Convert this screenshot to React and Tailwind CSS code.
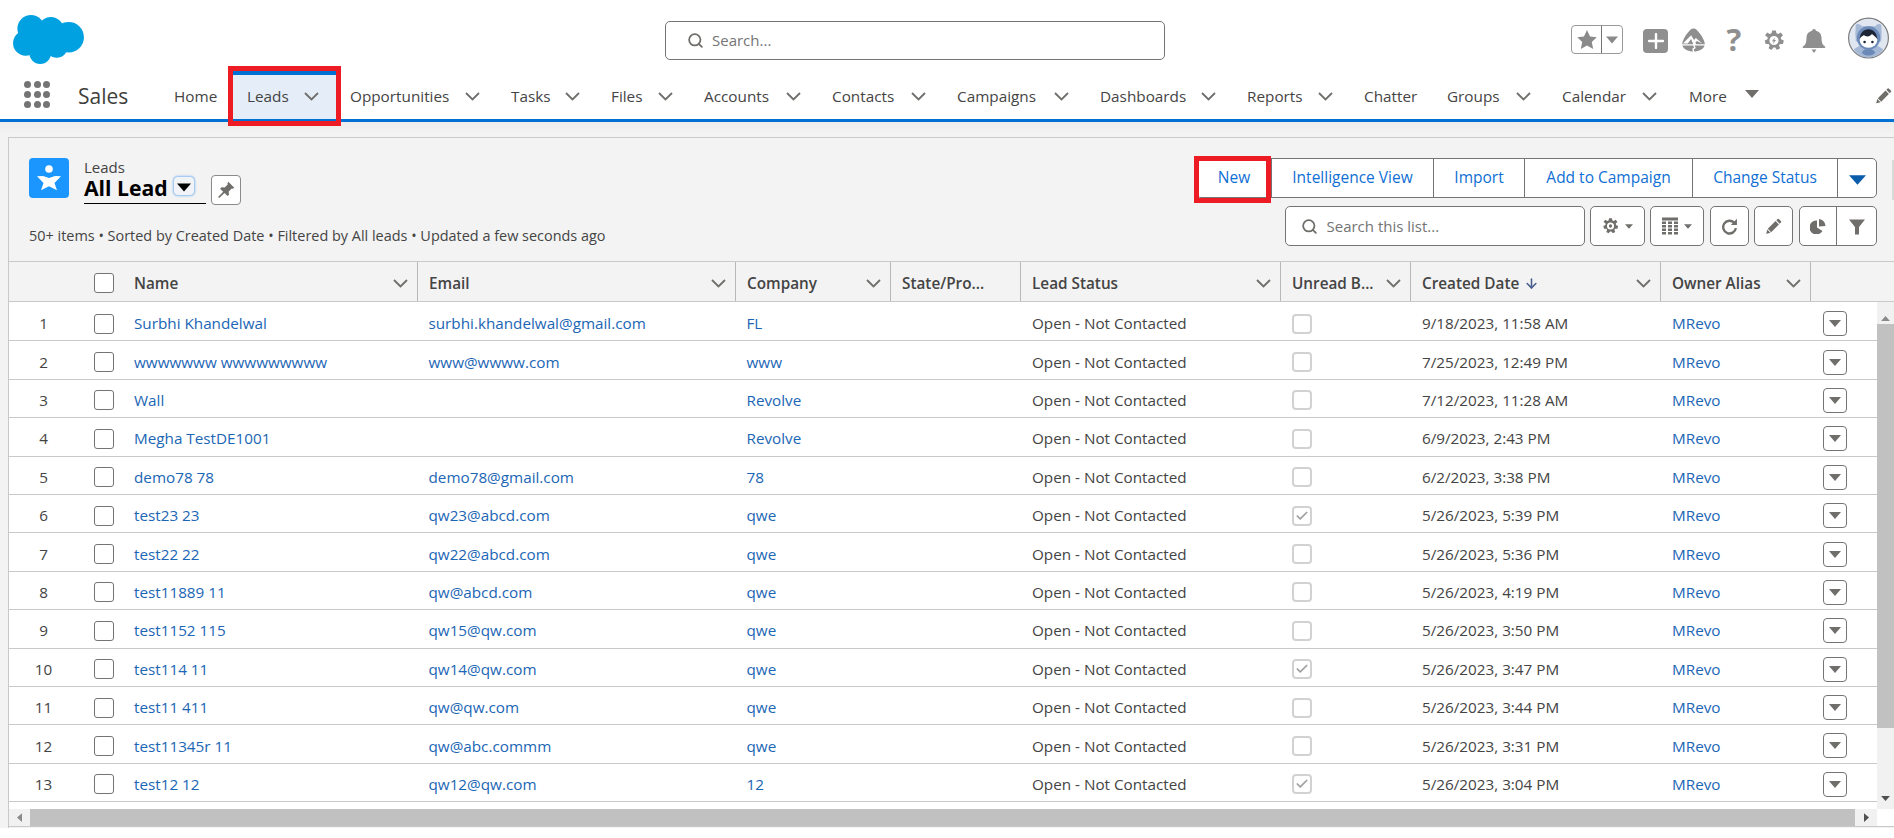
import React from "react";
import { Search, ArrowDown, Check } from "lucide-react";

const navItems = [
  { label: "Home", w: "w-[73px]" },
  { label: "Leads", w: "w-[103px]", chev: true, active: true },
  { label: "Opportunities", w: "w-[161px]", chev: true },
  { label: "Tasks", w: "w-[100px]", chev: true },
  { label: "Files", w: "w-[93px]", chev: true },
  { label: "Accounts", w: "w-[128px]", chev: true },
  { label: "Contacts", w: "w-[125px]", chev: true },
  { label: "Campaigns", w: "w-[143px]", chev: true },
  { label: "Dashboards", w: "w-[147px]", chev: true },
  { label: "Reports", w: "w-[117px]", chev: true },
  { label: "Chatter", w: "w-[83px]" },
  { label: "Groups", w: "w-[115px]", chev: true },
  { label: "Calendar", w: "w-[126px]", chev: true },
];

const rows = [
  ["Surbhi Khandelwal", "surbhi.khandelwal@gmail.com", "FL", false, "9/18/2023, 11:58 AM"],
  ["wwwwwww wwwwwwwww", "www@wwww.com", "www", false, "7/25/2023, 12:49 PM"],
  ["Wall", "", "Revolve", false, "7/12/2023, 11:28 AM"],
  ["Megha TestDE1001", "", "Revolve", false, "6/9/2023, 2:43 PM"],
  ["demo78 78", "demo78@gmail.com", "78", false, "6/2/2023, 3:38 PM"],
  ["test23 23", "qw23@abcd.com", "qwe", true, "5/26/2023, 5:39 PM"],
  ["test22 22", "qw22@abcd.com", "qwe", false, "5/26/2023, 5:36 PM"],
  ["test11889 11", "qw@abcd.com", "qwe", false, "5/26/2023, 4:19 PM"],
  ["test1152 115", "qw15@qw.com", "qwe", false, "5/26/2023, 3:50 PM"],
  ["test114 11", "qw14@qw.com", "qwe", true, "5/26/2023, 3:47 PM"],
  ["test11 411", "qw@qw.com", "qwe", false, "5/26/2023, 3:44 PM"],
  ["test11345r 11", "qw@abc.commm", "qwe", false, "5/26/2023, 3:31 PM"],
  ["test12 12", "qw12@qw.com", "12", true, "5/26/2023, 3:04 PM"],
];

const Tri = ({ className }) => (
  <svg viewBox="0 0 14 8" className={className} fill="currentColor">
    <path d="M0 0h14L7 8z" />
  </svg>
);

const Chev = () => (
  <svg viewBox="0 0 15 9" className="w-[15px] h-[9px] shrink-0 text-[#706e6b]" fill="none" stroke="currentColor" strokeWidth="1.800">
    <path d="M1 1l6.500 6.500L14 1" />
  </svg>
);

const Gear = ({ className, bolt }) => (
  <svg viewBox="0 0 24 24" className={className} fill="currentColor">
    <path
      fillRule="evenodd"
      d="M10 1h4l.7 3.200 1.900.8L19.400 3.200l2.400 3.200-2.400 2.200.3 2.100 3 1.300-.9 3.900-3.200-.1-1.200 1.700 1.300 3-3.500 1.800-1.800-2.700h-2.100l-1.900 2.700-3.400-1.800 1.300-3-1.200-1.700-3.200.1-1-3.900 3-1.300.3-2.100L2.200 6.400l2.400-3.200 2.800 1.800 1.900-.8zM12 7a5 5 0 1 0 0 10 5 5 0 0 0 0-10z"
    />
    {bolt ? <path d="M13.200 8.400 9.800 12.800h2l-1 3 3.400-4.400h-2z" /> : <circle cx="12" cy="12" r="2.300" />}
  </svg>
);

const Pencil = ({ className }) => (
  <svg viewBox="0 0 20 20" className={className} fill="currentColor">
    <path d="M14.600 1.200a1 1 0 0 1 1.400 0l2.800 2.800a1 1 0 0 1 0 1.400l-1.700 1.700-4.200-4.200zM11.900 3.900l4.200 4.200-9.600 9.600-4.200-4.200zM1.600 14.400l4 4-4.600 1.200a.5.5 0 0 1-.6-.6z" />
  </svg>
);

const Logo = () => (
  <svg viewBox="38 45 214 148" className="w-[71px] h-[49px] shrink-0" fill="#00a1e0">
    <circle cx="92" cy="86" r="41" />
    <circle cx="152" cy="90" r="39" />
    <circle cx="206" cy="112" r="46" />
    <circle cx="76" cy="130" r="38" />
    <circle cx="120" cy="160" r="33" />
    <circle cx="170" cy="141" r="33" />
    <rect x="90" y="90" width="100" height="60" />
  </svg>
);

const LeadIcon = () => (
  <div className="w-10 h-10 rounded-[4px] bg-[#1b96ff] shrink-0 flex items-center justify-center">
    <svg viewBox="0 0 40 40" className="w-10 h-10" fill="#fff">
      <circle cx="20" cy="11" r="3.800" />
      <path d="M8 18.200 14 18l6 2 6-2 6 .2-6.500 6.800 2.500 7.200-8-4-8 4 2.500-7.200z" />
    </svg>
  </div>
);

const Trailhead = ({ className }) => (
  <svg viewBox="0 0 24 25" className={className}>
    <path
      fill="currentColor"
      d="M12 0c2.400 0 4.200 2.200 6 4.400 2.800 3.400 5.400 8 5.800 11.100.2 2.600-1.300 5-3.700 6.300-2.500 1.400-5.200 2.200-8.100 2.200s-5.600-.8-8.100-2.200C1.500 20.500 0 18.100.2 15.500.6 12.400 3.200 7.800 6 4.400 7.800 2.200 9.600 0 12 0z"
    />
    <path fill="#fff" d="M1 15.500 9.500 7l3 5 2-2 6.500 5.500-5.500-2.500-1.500 1.500 1 2.500H12l-2.500-6-3.500 4.500z" />
    <path fill="none" stroke="#fff" strokeWidth="1.400" d="M0 17h24M12 17l1.500 3-2 1.500.8 3.500" />
  </svg>
);

const Avatar = () => (
  <svg viewBox="0 0 42 42" className="w-[41px] h-[42px] shrink-0">
    <circle cx="21" cy="21" r="20.400" fill="#e1e7f1" stroke="#7a7a7a" strokeWidth="1.200" />
    <path d="M8 7.500c2-1.500 4.500-.5 6 1.500h14c1.500-2 4-3 6-1.500l.5 8-.5 9H8l-.5-9z" fill="#a5b8d5" />
    <path d="M6 33c4-4 9-5 15-5s11 1 15 5c-3.500 5-9 8-15 8S9.500 38 6 33z" fill="#a5b8d5" />
    <circle cx="21" cy="21" r="12" fill="#6c8ab8" />
    <path d="M14 36c2-3 4-4 7-4s5 1 7 4c-2 2-4.500 3-7 3s-5-1-7-3z" fill="#6c8ab8" />
    <ellipse cx="21" cy="23" rx="9" ry="8" fill="#fff" />
    <path d="M12 22c.2-6 4-10 9-10s8.800 4 9 10c-1.500-2-4-3.500-5.500-5-1 1.500-3 2.500-4.500 2.500s-3-.5-3.500-1.500c-1.500 1-3.500 2-4.500 4z" fill="#1c2536" />
    <circle cx="17" cy="25" r="1.300" fill="#1c2536" />
    <circle cx="25" cy="25" r="1.300" fill="#1c2536" />
  </svg>
);

function TopBar() {
  return (
    <div className="h-[71px] flex items-start pl-[13px]">
      <div className="mt-[15px]"><Logo /></div>
      <div className="mt-[21px] ml-[581px] w-[500px] h-[39px] border border-[#747474] rounded-[5px] flex items-center pl-[21px] bg-white">
        <Search size={17} strokeWidth={2.500} className="text-[#706e6b]" />
        <span className="ml-[8px] text-[15px] text-[#747474]">Search...</span>
      </div>
      <div className="mt-[25px] ml-[406px] w-[52px] h-[29px] border border-[#9a9a9a] rounded-[4px] flex text-[#8a8a8a]">
        <div className="w-[30px] flex items-center justify-center border-r border-[#747474]">
          <svg viewBox="1 1 18 17.500" className="w-[20px] h-[19px]" fill="currentColor">
            <path d="m10 1 2.800 6 6.200.7-4.600 4.300 1.300 6.500L10 15.200 4.300 18.500 5.600 12 1 7.700 7.200 7z" />
          </svg>
        </div>
        <div className="flex-1 flex items-center justify-center"><Tri className="w-[12px] h-[8px]" /></div>
      </div>
      <div className="mt-[29px] ml-[20px] w-[25px] h-[24px] rounded-[4px] bg-[#8f8f8f] flex items-center justify-center">
        <svg viewBox="0 0 16 16" className="w-[16px] h-[16px]" stroke="#fff" strokeWidth="2.400" strokeLinecap="round"><path d="M8 1v14M1 8h14" /></svg>
      </div>
      <div className="mt-[28px] ml-[14px] text-[#8f8f8f]"><Trailhead className="w-[23px] h-[25px]" /></div>
      <div className="mt-[24px] ml-[21px] w-[16px] h-[30px] flex items-center justify-center text-[#8f8f8f] text-[31px] font-bold leading-none">?</div>
      <div className="mt-[29px] ml-[21px] text-[#8f8f8f]"><Gear className="w-[22px] h-[23px]" bolt /></div>
      <div className="mt-[29px] ml-[17px] text-[#8f8f8f]">
        <svg viewBox="0 0 24 24" className="w-[24px] h-[24px]" fill="currentColor">
          <path d="M12 0c1 0 1.800.8 1.900 1.800 3.700.8 5.600 3.700 5.600 7.200 0 4.500 1.100 7 3.500 8.500.7.500.4 1.500-.5 1.500H1.500c-.9 0-1.200-1-.5-1.500C3.400 16 4.500 13.500 4.500 9c0-3.500 1.900-6.400 5.600-7.200C10.200.8 11 0 12 0zM9.500 20.500h5L12 24z" />
        </svg>
      </div>
      <div className="mt-[17px] ml-[22px]"><Avatar /></div>
    </div>
  );
}

function NavBar() {
  return (
    <div className="h-[51px] border-b-[3px] border-[#0070d2] flex items-stretch bg-white">
      <div className="ml-[24px] mt-[10px] w-[26px] h-[26px] grid grid-cols-3 gap-x-[3px] gap-y-[3px] shrink-0">
        {Array.from({ length: 9 }).map((_, i) => (
          <span key={i} className="w-[7px] h-[7px] rounded-full bg-[#747474]" />
        ))}
      </div>
      <div className="ml-[28px] w-[82px] shrink-0 text-[21px] text-[#3e3e3c] leading-[50px]">Sales</div>
      {navItems.map((n) => (
        <div
          key={n.label}
          className={`${n.w} shrink-0 flex items-center justify-between pl-[14px] pr-[17px] pb-[1px] text-[15.300px] text-[#444] border-t-4 whitespace-nowrap ${
            n.active ? "bg-[#e5eef8] border-[#0070d2]" : "border-transparent"
          }`}
        >
          <span className="-mt-[1px]">{n.label}</span>
          {n.chev && <Chev />}
        </div>
      ))}
      <div className="flex items-center pl-[15px] pb-[1px] text-[15.300px] text-[#444] border-t-4 border-transparent">
        <span className="-mt-[1px]">More</span>
        <Tri className="w-[14px] h-[8px] ml-[18px] text-[#706e6b] -mt-[6px]" />
      </div>
      <div className="ml-auto mr-[2px] flex items-center text-[#706e6b]">
        <Pencil className="w-[16px] h-[17px]" />
      </div>
    </div>
  );
}

function CardHead() {
  return (
    <div className="h-[123px] flex justify-between pl-[20px] pr-[17px] pt-[20px]">
      <div>
        <div className="flex items-start">
          <LeadIcon />
          <div className="ml-[15px] w-[122px]">
            <div className="text-[15px] leading-[20px] -mt-[1px] text-[#444]">Leads</div>
            <div className="h-[27px] flex items-start border-b border-black">
              <span className="text-[21.200px] leading-[22px] font-bold text-black">All Lead</span>
              <span className="ml-[5px] mt-[-1px] w-[22px] h-[20px] rounded-[5px] bg-[#f1f3f7] border border-[#a9cdf2] shadow-[0_0_2px_#7fb2ea] flex items-center justify-center text-black">
                <Tri className="w-[14px] h-[9px] mt-[3px]" />
              </span>
            </div>
          </div>
          <div className="ml-[5px] mt-[17px] w-[30px] h-[30px] bg-white border border-[#8a8a8a] rounded-[4px] flex items-center justify-center text-[#706e6b]">
            <svg viewBox="0 0 20 20" className="w-[18px] h-[18px]" fill="currentColor">
              <path d="M12.500.800 19.200 7.500l-1.600 1.200-1.200-.3-3.400 3.400.3 3.500-1.500 1.500-3.500-3.500L2.500 19l-1.300-1.300 5.700-5.800-3.400-3.400 1.500-1.500 3.500.3 3.400-3.400-.3-1.200z" />
            </svg>
          </div>
        </div>
        <div className="mt-[21px] text-[14.450px] leading-[20px] text-[#444] whitespace-nowrap">
          50+ items • Sorted by Created Date • Filtered by All leads • Updated a few seconds ago
        </div>
      </div>
      <div className="w-[681px]">
        <div className="h-[40px] flex border border-[#747474] rounded-[5px] bg-white text-[15.500px] text-[#0f6fd4] whitespace-nowrap">
          <div className="w-[75px] flex items-center justify-center border-r border-[#747474]">New</div>
          <div className="w-[162px] flex items-center justify-center border-r border-[#747474]">Intelligence View</div>
          <div className="w-[91px] flex items-center justify-center border-r border-[#747474]">Import</div>
          <div className="w-[168px] flex items-center justify-center border-r border-[#747474]">Add to Campaign</div>
          <div className="w-[145px] flex items-center justify-center border-r border-[#747474]">Change Status</div>
          <div className="flex-1 flex items-center justify-center text-[#0b5cab]"><Tri className="w-[17px] h-[10px] mt-[4px]" /></div>
        </div>
        <div className="mt-[8px] h-[40px] flex justify-end gap-[5.500px] text-[#706e6b]">
          <div className="w-[300px] border border-[#747474] rounded-[5px] bg-white flex items-center pl-[15px]">
            <Search size={17} strokeWidth={2.500} />
            <span className="ml-[9px] text-[15px] text-[#747474]">Search this list...</span>
          </div>
          <div className="w-[54.500px] border border-[#747474] rounded-[5px] bg-white flex items-center justify-center gap-[6px]">
            <Gear className="w-[17px] h-[18px]" />
            <Tri className="w-[8px] h-[5px]" />
          </div>
          <div className="w-[54px] border border-[#747474] rounded-[5px] bg-white flex items-center justify-center gap-[6px]">
            <svg viewBox="0 0 16 17" className="w-[16px] h-[18px]" fill="currentColor">
              <path d="M0 0h16v3H0zM0 4h4v2.500H0zM6 4h4v2.500H6zM12 4h4v2.500h-4zM0 7.500h4V10H0zM6 7.500h4V10H6zM12 7.500h4V10h-4zM0 11h4v2.500H0zM6 11h4v2.500H6zM12 11h4v2.500h-4zM0 14.500h4V17H0zM6 14.500h4V17H6zM12 14.500h4V17h-4z" />
            </svg>
            <Tri className="w-[8px] h-[5px]" />
          </div>
          <div className="w-[39px] border border-[#747474] rounded-[5px] bg-white flex items-center justify-center">
            <svg viewBox="0 0 16 16" className="w-[17px] h-[17px]" fill="none" stroke="currentColor" strokeWidth="2.200">
              <path d="M12.300 4.300A6 6 0 1 0 14 9.500" />
              <path d="M15 .8v5.700H9.300z" fill="currentColor" stroke="none" />
            </svg>
          </div>
          <div className="w-[39px] border border-[#747474] rounded-[5px] bg-white flex items-center justify-center">
            <Pencil className="w-[16px] h-[16px]" />
          </div>
          <div className="w-[78.500px] border border-[#747474] rounded-[5px] bg-white flex">
            <div className="flex-1 flex items-center justify-center border-r border-[#747474]">
              <svg viewBox="0 0 16 16" className="w-[16px] h-[16px]" fill="currentColor">
                <path d="M7 2.500v7l5.500 3.500A7 7 0 1 1 7 2.500zM9 1a7 7 0 0 1 6.500 7L9 8.500z" />
              </svg>
            </div>
            <div className="w-[39px] flex items-center justify-center">
              <svg viewBox="0 0 16 16" className="w-[16px] h-[17px]" fill="currentColor">
                <path d="M0 1h16L10 8.500V16H6V8.500z" />
              </svg>
            </div>
          </div>
        </div>
      </div>
    </div>
  );
}

const HeadCell = ({ label, noChev, arrow, pad = "pl-[11px]" }) => (
  <div className={`flex items-center justify-between ${pad} pr-[9px] pt-[3px] border-r border-[#b8b8b8] min-w-0`}>
    <span className="flex items-center min-w-0 text-[#444] font-semibold text-[15.300px] whitespace-nowrap">
      {label}
      {arrow && <ArrowDown size={15} strokeWidth={2.500} className="ml-[5px] text-[#4a5f8f]" />}
    </span>
    {!noChev && <Chev />}
  </div>
);

function TableHead() {
  return (
    <div className="grid grid-cols-[69px_46px_294px_318px_155px_130px_260px_130px_250px_150px_1fr] h-[41px] border-t border-b border-[#c9c9c9] bg-[#f3f3f3]">
      <div />
      <div className="flex items-center pl-[16px] pt-[3px]">
        <span className="w-[20px] h-[20px] bg-white border border-[#747474] rounded-[3px]" />
      </div>
      <HeadCell label="Name" pad="pl-[10px]" />
      <HeadCell label="Email" />
      <HeadCell label="Company" />
      <HeadCell label="State/Pro..." noChev />
      <HeadCell label="Lead Status" />
      <HeadCell label="Unread B..." />
      <HeadCell label="Created Date" arrow />
      <HeadCell label="Owner Alias" />
      <div />
    </div>
  );
}

function Row({ r, i }) {
  const [name, email, company, checked, date] = r;
  return (
    <div className="grid grid-cols-[69px_46px_294px_318px_155px_130px_260px_130px_250px_150px_66px] h-[38.400px] pt-[4px] border-b border-[#c9c9c9] items-center text-[15.250px] text-[#444] whitespace-nowrap bg-white">
      <div className="text-center">{i + 1}</div>
      <div className="pl-[16px] flex">
        <span className="w-[20px] h-[20px] bg-white border border-[#747474] rounded-[3px]" />
      </div>
      <div className="pl-[10px] text-[#1b66b5]">{name}</div>
      <div className="pl-[10.500px] text-[#1b66b5]">{email}</div>
      <div className="pl-[10.500px] text-[#1b66b5]">{company}</div>
      <div />
      <div className="pl-[11px]">Open - Not Contacted</div>
      <div className="pl-[11px] flex">
        <span className="w-[20px] h-[20px] border-2 border-[#d2d2d2] rounded-[4px] bg-white flex items-center justify-center">
          {checked && <Check size={14} strokeWidth={3} className="text-[#a0a0a0]" />}
        </span>
      </div>
      <div className="pl-[11px]">{date}</div>
      <div className="pl-[11px] text-[#1b66b5]">MRevo</div>
      <div className="pl-[11.500px] flex">
        <span className="w-[24px] h-[25px] border border-[#747474] rounded-[4px] flex items-center justify-center text-[#706e6b]">
          <Tri className="w-[12px] h-[7px]" />
        </span>
      </div>
    </div>
  );
}

function VScroll() {
  return (
    <div className="w-[17px] bg-[#f1f1f1] flex flex-col items-center text-[#8a8a8a]">
      <div className="h-[22px] flex items-end pb-[3px]"><Tri className="w-[9px] h-[5px] rotate-180" /></div>
      <div className="w-[17px] h-[404px] bg-[#c1c1c1]" />
      <div className="flex-1 flex items-end pb-[8px] text-[#505050]"><Tri className="w-[9px] h-[5px]" /></div>
    </div>
  );
}

function HScroll() {
  return (
    <div className="h-[18px] flex bg-white border-b border-[#c9c9c9]">
      <div className="w-[1868px] bg-[#f1f1f1] flex items-stretch text-[#8a8a8a]">
        <div className="w-[21px] flex items-center justify-center"><Tri className="w-[9px] h-[5px] rotate-90" /></div>
        <div className="flex-1 bg-[#c1c1c1]" />
        <div className="w-[22px] flex items-center justify-center text-[#505050]"><Tri className="w-[9px] h-[5px] -rotate-90" /></div>
      </div>
    </div>
  );
}

export default function App() {
  return (
    <div className="relative w-[1894px] h-[838px] overflow-hidden bg-white font-['Open_Sans',sans-serif] text-[14px]">
      <TopBar />
      <NavBar />
      <div className="h-[706px] bg-gradient-to-b from-[#ececec] to-[#f3f3f3] to-[12px] pt-[15px] pl-[8px]">
        <div className="h-[691px] bg-[#f3f3f3] border-t border-l border-[#c9c9c9]">
          <CardHead />
          <TableHead />
          <div className="flex h-[507px]">
            <div className="w-[1868px] bg-white pt-[1px]">
              {rows.map((r, i) => <Row key={i} r={r} i={i} />)}
            </div>
            <VScroll />
          </div>
          <HScroll />
        </div>
      </div>
      <div className="absolute left-[228px] top-[66px] w-[113px] h-[60px] border-[5px] border-[#ed1c24]" />
      <div className="absolute left-[1194px] top-[156px] w-[77px] h-[47px] border-[5px] border-[#ed1c24]" />
      <div className="absolute right-0 top-[160px] w-[2px] h-[40px] bg-[#d8d8d8]" />
    </div>
  );
}
